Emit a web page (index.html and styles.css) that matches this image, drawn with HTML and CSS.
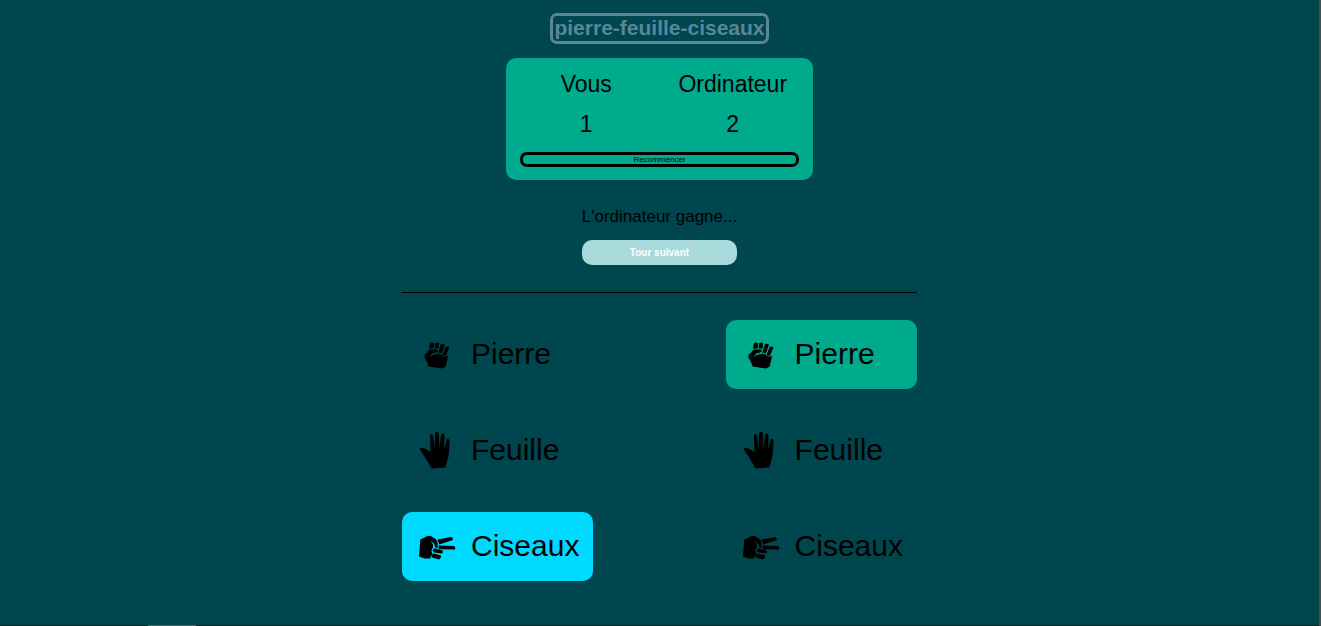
FILE: index.html
```html
<!DOCTYPE html>
<html lang="fr">
<head>
<meta charset="utf-8">
<meta name="viewport" content="width=device-width, initial-scale=1">
<title>pierre-feuille-ciseaux</title>
<link rel="stylesheet" href="styles.css">
</head>
<body>
<svg class="sprites" aria-hidden="true">
  <symbol id="rock" viewBox="0 0 38 38">
    <path d="M12.300 8.500Q14 7 16.700 8L16.200 13.300Q14 13 11.700 14ZM17.600 8Q19.500 7 21.600 8L21 13.800Q19 13 17.200 13.400ZM23.300 9.500Q25.300 8 27.400 9.700L24.500 18Q22.500 18.700 20.900 17.300ZM28 12.300Q30.200 10.500 32 12.600L28.800 20Q26.500 21.800 25 20Z"/>
    <path d="M11 15.200Q14 13.800 19.700 14.400L20.200 16.800Q18.500 18.100 15.500 18.100Q13 19.300 12.500 22.300Q14 20 16.500 19.600Q19.500 19.500 20.800 18.400Q22 19.600 24 19.200Q24.500 21.600 27.500 21.800L30.300 20.500L30 24L28.200 31.500L24.700 33.500L11 31.500L10 28L7 22.500V20Q8.500 18.300 9.800 17.800Q10 16.200 11 15.200Z"/>
  </symbol>
  <symbol id="paper" viewBox="0 0 38 38">
    <path d="M2 18Q4 15.600 7 17.600L13 21L12.500 5.500Q12.500 3.300 13.800 3.300Q15.300 3.300 15.600 5.500L17.200 17.500L17.500 2.600Q17.700.700 19.500.700Q21.200.700 21.400 2.600L22 17.500L23.500 4.200Q23.900 2.300 25.500 2.600Q27.200 2.900 27 5.200L26.700 18L29.100 9Q29.600 7.700 31 8Q32.400 8.500 32.200 10.500L31 25.500L28.500 34L27.500 36.500L14 37.500L11.500 33L7 25.500Z"/>
  </symbol>
  <symbol id="scissors" viewBox="0 0 38 38">
    <path d="M2.800 12.500L10 9Q12.500 8 14.500 9.800L18.400 12.300Q20.500 14.500 20.300 19.500V21L17.800 20.500Q17.500 16 13 14Q16.500 17.500 15.500 20.500L13.800 23.500L15 27L13 29.500V31.500L7 31.500L1.500 29.500Z"/>
    <path d="M20 12.500L33.500 10Q35.600 10.200 35.300 13L21.800 17.500ZM21.300 18.500L36.500 19Q38.200 19.800 37.700 22.400L21.300 22.200ZM16.800 21.300L25 23.400Q26 25 24.700 26.500L16.800 25.600L15 23.700ZM16 26.500L23.400 28.200Q24.200 30 22 32.200H20.300L14 30.200V28.500Z"/>
  </symbol>
</svg>
<main class="game">
  <h1 class="title">pierre-feuille-ciseaux</h1>
  <section class="score">
    <div class="player"><span>Vous</span><span>1</span></div>
    <div class="player"><span>Ordinateur</span><span>2</span></div>
    <button class="restart" type="button">Recommencer</button>
  </section>
  <section class="result">
    <p class="message">L'ordinateur gagne...</p>
    <button class="next" type="button">Tour suivant</button>
  </section>
  <section class="board">
    <div class="choices">
      <button class="choice" type="button"><svg class="hand"><use href="#rock"/></svg>Pierre</button>
      <button class="choice" type="button"><svg class="hand"><use href="#paper"/></svg>Feuille</button>
      <button class="choice choice-user" type="button"><svg class="hand"><use href="#scissors"/></svg>Ciseaux</button>
    </div>
    <div class="choices">
      <button class="choice choice-computer" type="button"><svg class="hand"><use href="#rock"/></svg>Pierre</button>
      <button class="choice" type="button"><svg class="hand"><use href="#paper"/></svg>Feuille</button>
      <button class="choice" type="button"><svg class="hand"><use href="#scissors"/></svg>Ciseaux</button>
    </div>
  </section>
</main>
<div class="edge"><div class="edge-mark"></div></div>
</body>
</html>
```
FILE: styles.css
```css
* { box-sizing: border-box; }

body {
  margin: 0;
  min-height: 100vh;
  display: flex;
  flex-direction: column;
  border-right: 2px solid #4b4a4f;
  background: #00464f;
  color: #000;
  font-family: "Liberation Sans", Arial, sans-serif;
}

button {
  font-family: inherit;
  color: inherit;
  cursor: pointer;
}

.sprites {
  position: absolute;
  width: 0;
  height: 0;
}

.game {
  flex: 1;
  display: flex;
  flex-direction: column;
  align-items: center;
  padding-top: 13px;
}

.title {
  margin: 0;
  padding: 0 1px 2px;
  border: 3px solid #5a8699;
  border-radius: 7px;
  color: #5a8699;
  font-size: 21px;
  line-height: 23px;
}

.score {
  display: grid;
  grid-template-columns: 1fr 1fr;
  column-gap: 14px;
  width: 307px;
  margin-top: 14px;
  padding: 13px 14px;
  border-radius: 10px;
  background: #00aa8d;
  font-size: 23px;
  line-height: 27px;
}

.player {
  display: flex;
  flex-direction: column;
  align-items: center;
  gap: 13px;
}

.restart {
  grid-column: 1 / -1;
  margin-top: 14px;
  padding: 0;
  border: 3px solid #000;
  border-radius: 7px;
  background: none;
  font-size: 8px;
  line-height: 9px;
}

.result {
  display: flex;
  flex-direction: column;
  gap: 14px;
  margin: 27px 0;
}

.message {
  margin: 0;
  font-size: 17px;
  line-height: 19px;
}

.next {
  padding: 0;
  border: 0;
  border-radius: 10px;
  background: #a8dadc;
  color: #fff;
  font-size: 10px;
  font-weight: bold;
  line-height: 25px;
}

.board {
  display: flex;
  justify-content: space-between;
  width: 515px;
  max-width: 100%;
  padding: 27px 0;
  border-top: 1px solid #000;
}

.choices {
  display: flex;
  flex-direction: column;
  gap: 27px;
}

.choice {
  display: flex;
  align-items: center;
  gap: 14px;
  padding: 13px 14px 15px;
  border: 0;
  border-radius: 10px;
  background: none;
  font-size: 30px;
  line-height: 41px;
}

.choice-user { background: #00d9ff; }
.choice-computer { background: #00aa8d; }

.hand {
  width: 41px;
  height: 38px;
}

.edge {
  padding-left: 148px;
  background: #0d2a33;
}

.edge-mark {
  width: 48px;
  height: 1px;
  background: #51606a;
}
```
